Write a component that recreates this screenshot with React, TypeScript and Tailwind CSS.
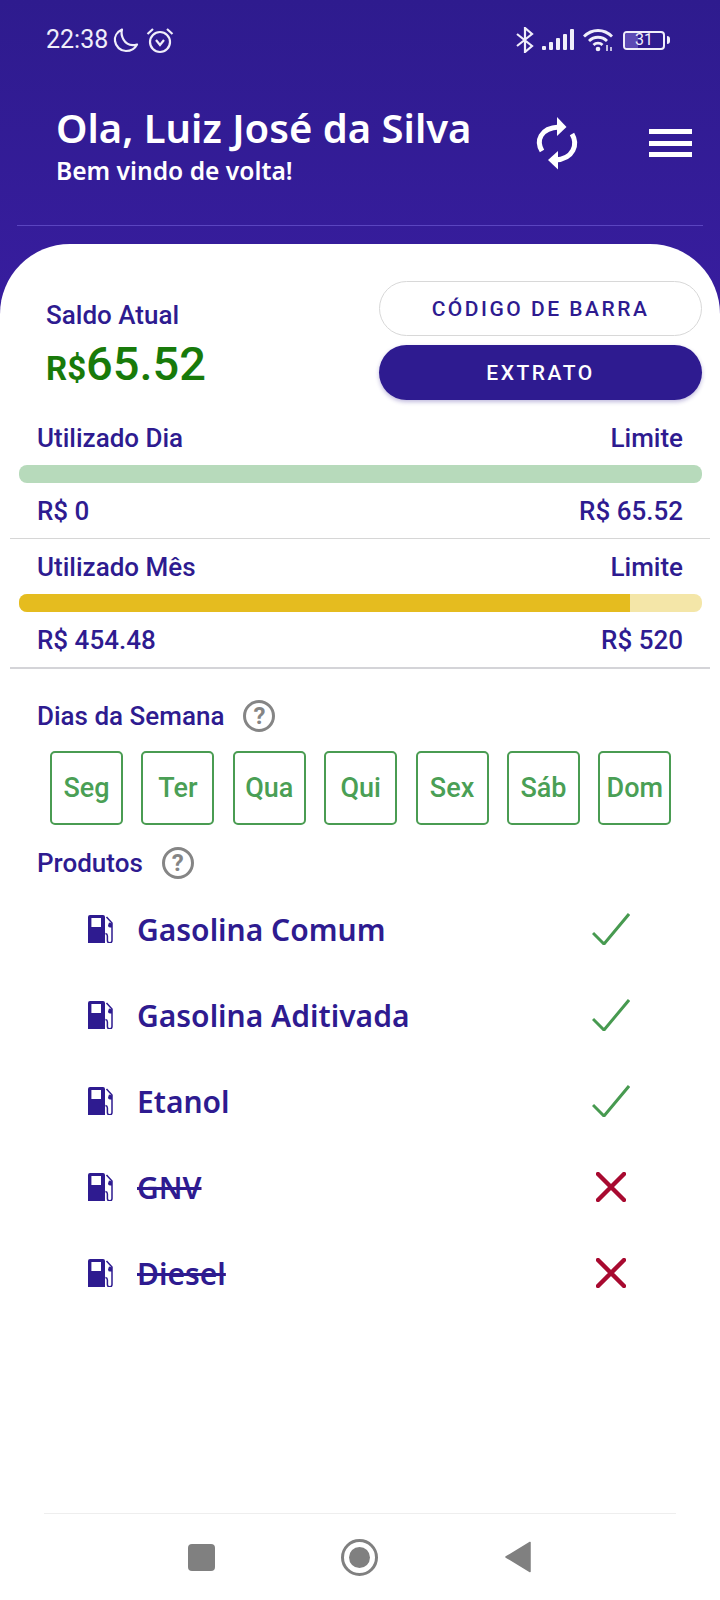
const roboto = "font-['Roboto',sans-serif]";
const days = ["Seg", "Ter", "Qua", "Qui", "Sex", "Sáb", "Dom"];
const products = [
  { name: "Gasolina Comum", ok: true },
  { name: "Gasolina Aditivada", ok: true },
  { name: "Etanol", ok: true },
  { name: "GNV", ok: false },
  { name: "Diesel", ok: false },
];

function Fuel() {
  return (
    <svg width="26" height="28" viewBox="0 0 26 28" fill="none" className="shrink-0">
      <path fillRule="evenodd" clipRule="evenodd" d="M2 0h13a2 2 0 0 1 2 2v26H0V2a2 2 0 0 1 2-2zM3.400 3v9h9.600V3z" fill="#2e1b90" />
      <path d="M18.500 2l5.500 6v17.500a2.300 2.300 0 0 1-4.600 0V21a2.500 2.500 0 0 0-2-2.500" stroke="#2e1b90" strokeWidth="1.500" />
      <path d="M21 7.500l3 1v4h-2a2 2 0 0 1-2-2z" fill="#2e1b90" />
    </svg>
  );
}

function Help() {
  return (
    <div className={`w-[32px] h-[32px] rounded-full border-[3px] border-[#858585] flex items-center justify-center text-[#858585] text-[24px] font-bold leading-none ${roboto}`}>
      ?
    </div>
  );
}

function Check() {
  return (
    <svg width="38" height="32" viewBox="0 0 38 32" fill="none">
      <path d="M1 20l11 11L37 1" stroke="#479a50" strokeWidth="3" />
    </svg>
  );
}

function Cross() {
  return (
    <svg width="30" height="30" viewBox="0 0 30 30" fill="none">
      <path d="M2 2l26 26M28 2L2 28" stroke="#a80a30" strokeWidth="4.400" strokeLinecap="round" />
    </svg>
  );
}

function StatusLeft() {
  return (
    <div className="flex items-center">
      <span className={`text-[25px] leading-[26px] text-[#f0eefa] ${roboto}`}>22:38</span>
      <svg width="26" height="25" viewBox="0 0 26 25" fill="none" className="ml-[5px]">
        <path d="M9 1.500C3.500 4 1.500 9 2 13c.6 5.500 5.500 10 11 10 4.500 0 9-2.500 11-6.500-6 1.500-11-.5-13.500-5C8.500 8 8 5 9 1.500z" stroke="#f0eefa" strokeWidth="2.200" strokeLinejoin="round" />
      </svg>
      <svg width="28" height="27" viewBox="0 0 28 27" fill="none" className="ml-[7px]">
        <circle cx="14" cy="15" r="10" stroke="#f0eefa" strokeWidth="2.200" />
        <path d="M1.500 7L7 2M26.500 7L21 2" stroke="#f0eefa" strokeWidth="2.200" />
        <path d="M10 13l4 5 4-5" stroke="#f0eefa" strokeWidth="2.200" />
      </svg>
    </div>
  );
}

function StatusRight() {
  return (
    <div className="flex items-center">
      <svg width="18" height="26" viewBox="0 0 18 26" fill="none">
        <path d="M1 7l15 12-7 6V1l7 6L1 19" stroke="#f0eefa" strokeWidth="2.200" />
      </svg>
      <svg width="32" height="22" viewBox="0 0 32 22" fill="#f0eefa" className="ml-[8px]">
        <rect x="0" y="17" width="4" height="4" rx="1" />
        <rect x="7" y="13" width="4" height="8" rx="1" />
        <rect x="14" y="9" width="4" height="12" rx="1" />
        <rect x="21" y="5" width="4" height="16" rx="1" />
        <rect x="28" y="0" width="4" height="21" rx="1" />
      </svg>
      <svg width="30" height="24" viewBox="0 0 30 24" fill="none" className="ml-[9px]">
        <path d="M1 8.500C9 .5 21 .5 29 8.500M6 13c5-5 13-5 18 0M10.500 17c2.500-2.500 6.500-2.500 9 0" stroke="#f0eefa" strokeWidth="2.800" />
        <circle cx="15" cy="21" r="2.300" fill="#f0eefa" />
        <path d="M24 17v6M28 19v4" stroke="#f0eefa" strokeWidth="1.500" />
      </svg>
      <div className="ml-[10px] flex items-center">
        <div className="relative w-[42px] h-[19px] rounded-[4px] border-2 border-[#f0eefa] overflow-hidden">
          <div className="absolute left-0 top-0 bottom-0 w-[13px] bg-[#5c4ab4]" />
          <div className={`absolute inset-0 flex items-center justify-center text-[16px] leading-none text-[#f0eefa] ${roboto}`}>31</div>
        </div>
        <div className="ml-[2px] w-[3px] h-[8px] bg-[#f0eefa] rounded-r-sm" />
      </div>
    </div>
  );
}

function Usage({ left, right, a, b, track, fill, pct, dividerClass }: { left: string; right: string; a: string; b: string; track: string; fill: string; pct: number; dividerClass: string }) {
  return (
    <div className={`${roboto} text-[#2e1b90] font-medium`}>
      <div className="px-[37px] flex justify-between text-[26px] leading-[26px]">
        <span>{left}</span>
        <span>{right}</span>
      </div>
      <div className={`mx-[18.500px] mt-[14px] h-[18px] rounded-[8px] overflow-hidden ${track}`}>
        <div className={`h-full ${fill}`} style={{ width: `${pct}%` }} />
      </div>
      <div className="px-[37px] mt-[15px] flex justify-between text-[26px] leading-[26px]">
        <span>{a}</span>
        <span>{b}</span>
      </div>
      <div className={`mt-[14px] ${dividerClass}`} />
    </div>
  );
}

export default function App() {
  return (
    <div className="w-[720px] h-[1600px] flex flex-col overflow-hidden bg-gradient-to-b from-[#2e1b8e] to-[#381d9f] to-[20%]">
      <header className="h-[244px] shrink-0 flex flex-col">
        <div className="mt-[26px] pl-[46px] pr-[50px] h-[28px] flex items-center justify-between">
          <StatusLeft />
          <StatusRight />
        </div>
        <div className="mt-[50px] flex items-start pl-[56px] pr-[28px]">
          <div className="text-white font-['Noto_Sans',sans-serif] font-semibold">
            <div className="text-[40px] leading-[48px]">Ola, Luiz José da Silva</div>
            <div className="text-[24.600px] leading-[32px] mt-[3px]">Bem vindo de volta!</div>
          </div>
          <svg width="60" height="65" viewBox="0 0 60 65" fill="none" className="ml-auto mr-[59px] mt-[6px]">
            <path d="M12 41C6 31 10 18 29 17" stroke="#fff" strokeWidth="5" />
            <path d="M27 7l9.500 10L27 26z" fill="#fff" />
            <path d="M42 24c6 10 2 25-17 26" stroke="#fff" strokeWidth="5" />
            <path d="M28 41l-10 9 10 9.500z" fill="#fff" />
          </svg>
          <div className="mt-[25px] w-[43px] flex flex-col gap-[6.500px]">
            <div className="h-[5px] bg-white" />
            <div className="h-[5px] bg-white" />
            <div className="h-[5px] bg-white" />
          </div>
        </div>
        <div className="mt-auto mb-[18px] mx-[17px] h-px bg-[#5a45c0]" />
      </header>

      <main className="flex-1 bg-white rounded-t-[70px] flex flex-col">
        <div className={`pt-[37px] flex ${roboto}`}>
          <div className="pl-[46px] pt-[20px]">
            <div className="text-[26px] leading-[28px] font-medium text-[#2e1b90]">Saldo Atual</div>
            <div className="mt-[8px] flex items-baseline font-medium text-[#187a0a] leading-[54px]">
              <span className="text-[33px] font-bold">R$</span>
              <span className="text-[47px]">65.52</span>
            </div>
          </div>
          <div className="ml-auto mr-[18px] w-[323px] flex flex-col gap-[9px] text-[21px] tracking-[2.500px] font-medium">
            <div className="h-[55px] pt-[2px] rounded-full border border-[#d8d8d8] text-[#2e1b90] flex items-center justify-center">CÓDIGO DE BARRA</div>
            <div className="h-[55px] pt-[2px] rounded-full bg-[#2e1b90] text-white flex items-center justify-center shadow-[0_2px_4px_rgba(46,27,144,0.3)]">EXTRATO</div>
          </div>
        </div>

        <div className="mt-[25px]">
          <Usage left="Utilizado Dia" right="Limite" a="R$ 0" b="R$ 65.52" track="bg-[#b7dabb]" fill="bg-[#4a9c52]" pct={0} dividerClass="mx-[10px] h-px bg-[#d6d6d6]" />
        </div>
        <div className="mt-[15px]">
          <Usage left="Utilizado Mês" right="Limite" a="R$ 454.48" b="R$ 520" track="bg-[#f4e6a8]" fill="bg-[#e5bc1f]" pct={89.6} dividerClass="mx-[10px] h-[2px] bg-[#d4d4d8]" />
        </div>

        <div className={`mt-[31px] pl-[37px] h-[32px] flex items-center gap-[19px] text-[26px] font-medium text-[#2e1b90] ${roboto}`}>
          <span>Dias da Semana</span>
          <Help />
        </div>
        <div className={`mt-[19px] pl-[50px] flex gap-[18.400px] ${roboto}`}>
          {days.map((d) => (
            <div key={d} className="w-[73px] h-[74px] rounded-[5px] border-2 border-[#4a9c52] flex items-center justify-center text-[27px] font-medium text-[#4a9f55]">
              {d}
            </div>
          ))}
        </div>
        <div className={`mt-[22px] pl-[37px] h-[32px] flex items-center gap-[19px] text-[26px] font-medium text-[#2e1b90] ${roboto}`}>
          <span>Produtos</span>
          <Help />
        </div>

        <div className="mt-[7px]">
          {products.map((p) => (
            <div key={p.name} className="h-[86px] pl-[88px] flex items-center">
              <Fuel />
              <span className={`ml-[23px] text-[30px] font-semibold text-[#2e1b90] font-['Noto_Sans',sans-serif] ${p.ok ? "" : "line-through"}`}>{p.name}</span>
              <div className="ml-auto w-[38px] mr-[90px] flex justify-center">{p.ok ? <Check /> : <Cross />}</div>
            </div>
          ))}
        </div>

        <footer className="mt-auto mx-[44px] h-[87px] border-t border-[#eeeeee] flex items-center">
          <div className="ml-[144px] w-[27px] h-[27px] rounded-[4px] bg-[#808080] mt-[1px]" />
          <div className="ml-[126px] w-[37px] h-[37px] rounded-full border-[3px] border-[#808080] flex items-center justify-center">
            <div className="w-[21px] h-[21px] rounded-full bg-[#808080]" />
          </div>
          <svg width="26" height="32" viewBox="0 0 26 32" fill="#808080" className="ml-[127px]">
            <path d="M25 1.500v29L1 16z" stroke="#808080" strokeWidth="1.500" strokeLinejoin="round" />
          </svg>
        </footer>
      </main>
    </div>
  );
}
